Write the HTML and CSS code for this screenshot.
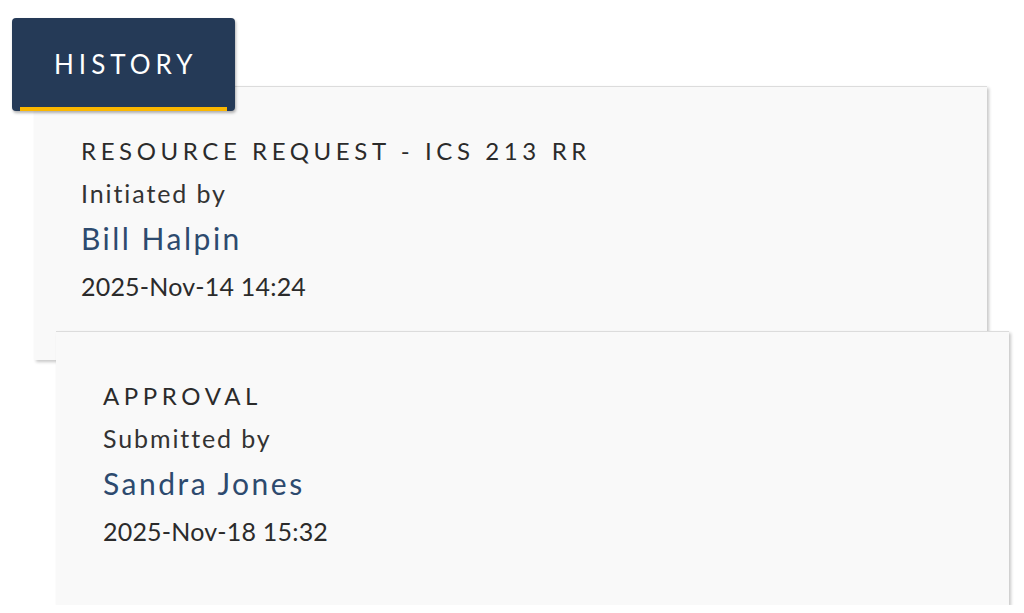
FILE: index.html
```html
<!DOCTYPE html>
<html lang="en">
<head>
<meta charset="utf-8">
<title>History</title>
<link rel="stylesheet" href="styles.css">
</head>
<body>
<div class="history">
  <div class="tab">HISTORY</div>
  <div class="card card-first">
    <div class="card-title">RESOURCE REQUEST - ICS 213 RR</div>
    <div class="card-label">Initiated by</div>
    <div class="card-name">Bill Halpin</div>
    <div class="card-date">2025-Nov-14 14:24</div>
  </div>
  <div class="card card-second">
    <div class="card-title">APPROVAL</div>
    <div class="card-label">Submitted by</div>
    <div class="card-name">Sandra Jones</div>
    <div class="card-date">2025-Nov-18 15:32</div>
  </div>
</div>
</body>
</html>
```

FILE: styles.css
```css
html, body {
  margin: 0;
  padding: 0;
  background: #ffffff;
}

body {
  font-family: Lato, "Open Sans", sans-serif;
  color: #2b2b2b;
}

.history {
  padding: 18px 0 0 12px;
}

.tab {
  position: relative;
  z-index: 3;
  box-sizing: border-box;
  width: 223px;
  height: 93px;
  margin-bottom: -25px;
  padding-top: 30px;
  padding-left: 42px;
  background: #253a57;
  color: #ffffff;
  border-radius: 4px;
  font-size: 26px;
  letter-spacing: 5px;
  line-height: 32px;
  box-shadow: 1px 2px 3px rgba(0, 0, 0, 0.3);
}

.tab::after {
  content: "";
  position: absolute;
  left: 8px;
  right: 8px;
  bottom: 0;
  height: 4px;
  background: #fbb700;
}

.card {
  position: relative;
  box-sizing: border-box;
  width: 953px;
  height: 274px;
  padding: 48px 0 0 47px;
  background: #f9f9f9;
  border-top: 1px solid #dcdcdc;
  box-shadow: 2px 2px 3px rgba(0, 0, 0, 0.22);
}

.card-first {
  z-index: 1;
  margin-left: 22px;
}

.card-second {
  z-index: 2;
  margin-left: 44px;
  margin-top: -29px;
}

.card-title {
  font-size: 24px;
  line-height: 32px;
  letter-spacing: 4.6px;
  color: #2b2b2b;
}

.card-label {
  font-size: 25px;
  line-height: 30px;
  margin-top: 11px;
  letter-spacing: 1.9px;
  color: #333333;
}

.card-name {
  font-size: 30px;
  line-height: 36px;
  margin-top: 12px;
  letter-spacing: 2.5px;
  color: #2d4a6e;
}

.card-date {
  font-size: 25px;
  line-height: 30px;
  margin-top: 15px;
  letter-spacing: 0.2px;
  color: #2b2b2b;
}
```
